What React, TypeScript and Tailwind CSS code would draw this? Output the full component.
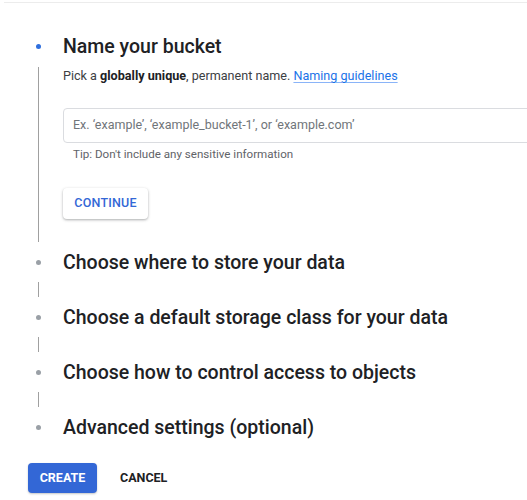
import { Fragment } from 'react';

const FONT = { fontFamily: 'Roboto, "Noto Sans", Arial, sans-serif' };

const STEPS = [
  'Choose where to store your data',
  'Choose a default storage class for your data',
  'Choose how to control access to objects',
  'Advanced settings (optional)',
];

export default function App() {
  return (
    <div className="h-[500px] w-[527px] overflow-hidden bg-white" style={FONT}>
      <div className="ml-[4px] mt-[2px] h-[1px] bg-[#ececec]" />

      <div className="pl-[36px] pt-[27px]">
        {/* Step 1: expanded */}
        <div className="flex">
          <div className="flex w-[5px] flex-col items-center">
            <div className="mt-[14px] h-[5px] w-[5px] shrink-0 rounded-full bg-[#2f6fde]" />
            <div className="mt-[18px] w-[1.5px] flex-1 bg-[#a0a0a0]" />
          </div>
          <div className="ml-[22px] min-w-0 flex-1 pb-[23px]">
            <h2 className="h-[33px] whitespace-nowrap text-[19.5px] font-medium leading-[33px] text-[#202124]">
              Name your bucket
            </h2>
            <p className="mt-[4px] h-[18px] whitespace-nowrap text-[12.6px] leading-[18px] text-[#3c4043]">
              Pick a <span className="font-bold text-[#202124]">globally unique</span>, permanent
              name.{' '}
              <a className="text-[#1a73e8] underline decoration-[#8ab4f8] underline-offset-2">
                Naming guidelines
              </a>
            </p>
            <div className="mt-[23px] flex h-[35px] w-[520px] items-center rounded-[4px] border border-[#dadce0] pl-[9px] text-[12.5px] text-[#70757a]">
              Ex. ‘example’, ‘example_bucket-1’, or ‘example.com’
            </div>
            <p className="ml-[10px] mt-[3px] h-[16px] text-[11.6px] leading-[16px] text-[#5f6368]">
              Tip: Don't include any sensitive information
            </p>
            <button className="mt-[26px] flex h-[31px] w-[85px] items-center justify-center rounded-[4px] bg-white text-[12.5px] font-medium tracking-[0.2px] text-[#3367d6] shadow-[0_1px_3px_rgba(60,64,67,0.3),0_1px_2px_rgba(60,64,67,0.15)]">
              CONTINUE
            </button>
          </div>
        </div>

        {/* Collapsed steps */}
        <div className="mt-[3px]">
          {STEPS.map((s, i) => (
            <Fragment key={s}>
              {i > 0 && (
                <div className="mb-[3px] ml-[1.75px] mt-[2px] h-[15px] w-[1.5px] bg-[#a0a0a0]" />
              )}
              <div className="flex h-[35px] items-center">
                <div className="h-[5px] w-[5px] shrink-0 rounded-full bg-[#9aa0a6]" />
                <span className="ml-[22px] whitespace-nowrap text-[19.5px] font-medium text-[#202124]">
                  {s}
                </span>
              </div>
            </Fragment>
          ))}
        </div>
      </div>

      <div className="mt-[18px] flex items-center pl-[28px]">
        <button className="flex h-[30px] w-[69px] items-center justify-center rounded-[4px] bg-[#3367d6] text-[12.5px] font-bold text-white shadow-[0_1px_2px_rgba(60,64,67,0.3)]">
          CREATE
        </button>
        <button className="ml-[23px] text-[12.5px] font-bold text-[#202124]">CANCEL</button>
      </div>
    </div>
  );
}
